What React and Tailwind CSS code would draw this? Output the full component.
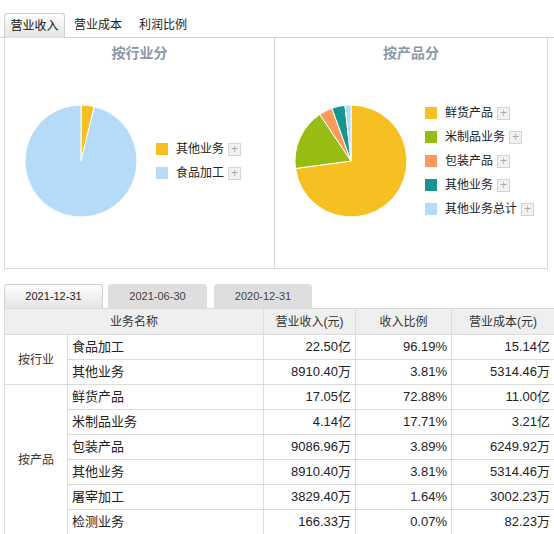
import React from "react";

const FONT = { fontFamily: '"Liberation Sans", "Noto Sans CJK SC", sans-serif' };

function slicePaths(cx, cy, r, values) {
  let a = -Math.PI / 2;
  return values.map((v) => {
    const b = a + (v / 100) * Math.PI * 2;
    const x1 = cx + r * Math.cos(a);
    const y1 = cy + r * Math.sin(a);
    const x2 = cx + r * Math.cos(b);
    const y2 = cy + r * Math.sin(b);
    const large = b - a > Math.PI ? 1 : 0;
    a = b;
    return `M${cx},${cy} L${x1},${y1} A${r},${r} 0 ${large} 1 ${x2},${y2} Z`;
  });
}

function Pie({ slices }) {
  const paths = slicePaths(60, 60, 56, slices.map((s) => s.v));
  return (
    <svg width="120" height="120" viewBox="0 0 120 120" className="shrink-0">
      {paths.map((d, i) => (
        <path key={i} d={d} fill={slices[i].c} stroke="#ffffff" strokeWidth="1" />
      ))}
    </svg>
  );
}

function Legend({ items }) {
  return (
    <div className="flex flex-col">
      {items.map((it, i) => (
        <div key={i} className="flex items-center h-6">
          <span className="w-3 h-3 shrink-0" style={{ background: it.c }} />
          <span className="ml-2 text-[12px] text-[#222]">{it.name}</span>
          <span className="ml-1 w-[13px] h-[13px] border border-[#d4d4d4] bg-[#f2f2f2] flex items-center justify-center text-[12px] leading-none text-[#aaa]">
            +
          </span>
        </div>
      ))}
    </div>
  );
}

const YELLOW = "#f6c022";
const LBLUE = "#b5dbf8";

const industry = [
  { name: "其他业务", v: 3.81, c: YELLOW },
  { name: "食品加工", v: 96.19, c: LBLUE },
];

const product = [
  { name: "鲜货产品", v: 72.88, c: YELLOW },
  { name: "米制品业务", v: 17.71, c: "#97bd12" },
  { name: "包装产品", v: 3.89, c: "#fc9a5b" },
  { name: "其他业务", v: 3.81, c: "#17968f" },
  { name: "其他业务总计", v: 1.71, c: LBLUE },
];

const rows = [
  { group: "按行业", span: 2, name: "食品加工", rev: "22.50亿", pct: "96.19%", cost: "15.14亿" },
  { name: "其他业务", rev: "8910.40万", pct: "3.81%", cost: "5314.46万" },
  { group: "按产品", span: 6, name: "鲜货产品", rev: "17.05亿", pct: "72.88%", cost: "11.00亿" },
  { name: "米制品业务", rev: "4.14亿", pct: "17.71%", cost: "3.21亿" },
  { name: "包装产品", rev: "9086.96万", pct: "3.89%", cost: "6249.92万" },
  { name: "其他业务", rev: "8910.40万", pct: "3.81%", cost: "5314.46万" },
  { name: "屠宰加工", rev: "3829.40万", pct: "1.64%", cost: "3002.23万" },
  { name: "检测业务", rev: "166.33万", pct: "0.07%", cost: "82.23万" },
];

export default function App() {
  const cell = "border border-[#dcdcdc] h-[25px] px-[4px]";
  const td = `${cell} text-[13px] text-[#222]`;
  const th = "border border-[#dcdcdc] h-[26px] text-[12px] text-[#333] font-normal bg-[#efefef]";
  return (
    <div className="w-[554px] h-[534px] overflow-hidden bg-white" style={FONT}>
      {/* top tabs */}
      <div className="pt-[13px] pl-[4px] flex items-end border-b border-[#cfcfcf] h-[38px]">
        <div className="w-[61px] h-[25px] -mb-px border border-[#cfcfcf] border-b-0 rounded-t-[3px] bg-gradient-to-b from-white to-[#e2e2e2] flex items-center justify-center text-[12px] text-[#111]">
          营业收入
        </div>
        <div className="h-[24px] ml-[9px] flex items-center text-[12px] text-[#222]">营业成本</div>
        <div className="h-[24px] ml-[17px] flex items-center text-[12px] text-[#222]">利润比例</div>
      </div>

      {/* charts */}
      <div className="ml-[4px] w-[544px] h-[231px] flex border-l border-r border-b border-[#d6d6d6]">
        <div className="w-[270px] border-r border-[#d6d6d6] flex flex-col">
          <div className="pt-[5px] text-center text-[14px] font-bold text-[#8a99aa]">按行业分</div>
          <div className="flex items-center mt-[37px] pl-[16px]">
            <Pie slices={industry} />
            <div className="ml-[15px]">
              <Legend items={industry} />
            </div>
          </div>
        </div>
        <div className="flex-1 flex flex-col">
          <div className="pt-[5px] text-center text-[14px] font-bold text-[#8a99aa]">按产品分</div>
          <div className="flex items-center mt-[37px] pl-[16px]">
            <Pie slices={product} />
            <div className="ml-[14px]">
              <Legend items={product} />
            </div>
          </div>
        </div>
      </div>

      {/* date tabs */}
      <div className="mt-[15px] pl-[4px] flex items-end h-[24px]">
        <div className="w-[99px] h-[24px] border border-[#cfcfcf] border-b-0 rounded-t-[3px] bg-gradient-to-b from-white to-[#e4e4e4] flex items-center justify-center text-[11px] text-[#222]">
          2021-12-31
        </div>
        <div className="w-[99px] h-[24px] ml-[5px] rounded-t-[4px] bg-[#dedede] flex items-center justify-center text-[11px] text-[#444]">
          2021-06-30
        </div>
        <div className="w-[98px] h-[24px] ml-[7px] rounded-t-[4px] bg-[#dedede] flex items-center justify-center text-[11px] text-[#444]">
          2020-12-31
        </div>
      </div>

      {/* table */}
      <table className="ml-[4px] w-[550px] border-collapse table-fixed">
        <colgroup>
          <col className="w-[63px]" />
          <col className="w-[196px]" />
          <col className="w-[92px]" />
          <col className="w-[96px]" />
          <col className="w-[103px]" />
        </colgroup>
        <thead>
          <tr>
            <th colSpan={2} className={th}>业务名称</th>
            <th className={th}>营业收入(元)</th>
            <th className={th}>收入比例</th>
            <th className={th}>营业成本(元)</th>
          </tr>
        </thead>
        <tbody>
          {rows.map((r, i) => (
            <tr key={i}>
              {r.group && (
                <td rowSpan={r.span} className={`${cell} text-center text-[12px] text-[#333]`}>
                  {r.group}
                </td>
              )}
              <td className={`${td} text-left`}>{r.name}</td>
              <td className={`${td} text-right`}>{r.rev}</td>
              <td className={`${td} text-right`}>{r.pct}</td>
              <td className={`${td} text-right`}>{r.cost}</td>
            </tr>
          ))}
        </tbody>
      </table>
    </div>
  );
}
